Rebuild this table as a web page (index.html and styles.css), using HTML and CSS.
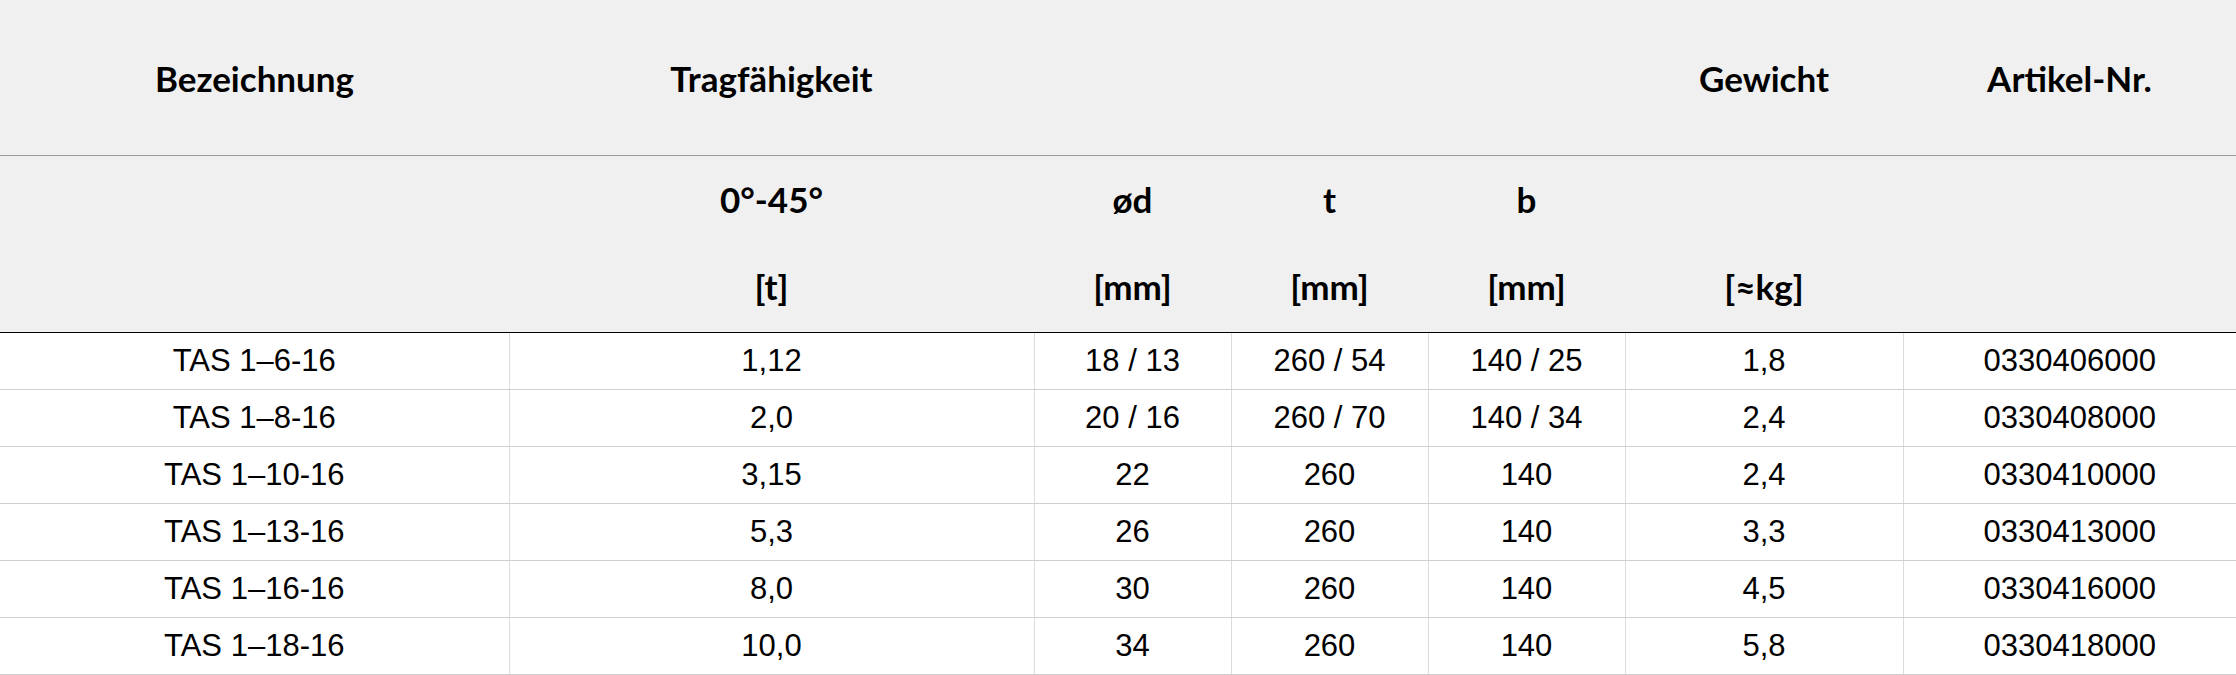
FILE: index.html
```html
<!DOCTYPE html>
<html lang="de">
<head>
<meta charset="utf-8">
<title>TAS Tabelle</title>
<link rel="stylesheet" href="styles.css">
</head>
<body>
<table class="spec">
  <colgroup>
    <col class="c-name">
    <col class="c-load">
    <col class="c-dim">
    <col class="c-dim">
    <col class="c-dim">
    <col class="c-weight">
    <col class="c-art">
  </colgroup>
  <thead>
    <tr class="h-top">
      <th>Bezeichnung</th>
      <th>Tragfähigkeit</th>
      <th></th>
      <th></th>
      <th></th>
      <th>Gewicht</th>
      <th>Artikel-Nr.</th>
    </tr>
    <tr class="h-mid">
      <th></th>
      <th>0°-45°</th>
      <th>ød</th>
      <th>t</th>
      <th>b</th>
      <th></th>
      <th></th>
    </tr>
    <tr class="h-unit">
      <th></th>
      <th>[t]</th>
      <th>[mm]</th>
      <th>[mm]</th>
      <th>[mm]</th>
      <th>[≈kg]</th>
      <th></th>
    </tr>
  </thead>
  <tbody>
    <tr><td>TAS 1–6-16</td><td>1,12</td><td>18 / 13</td><td>260 / 54</td><td>140 / 25</td><td>1,8</td><td>0330406000</td></tr>
    <tr><td>TAS 1–8-16</td><td>2,0</td><td>20 / 16</td><td>260 / 70</td><td>140 / 34</td><td>2,4</td><td>0330408000</td></tr>
    <tr><td>TAS 1–10-16</td><td>3,15</td><td>22</td><td>260</td><td>140</td><td>2,4</td><td>0330410000</td></tr>
    <tr><td>TAS 1–13-16</td><td>5,3</td><td>26</td><td>260</td><td>140</td><td>3,3</td><td>0330413000</td></tr>
    <tr><td>TAS 1–16-16</td><td>8,0</td><td>30</td><td>260</td><td>140</td><td>4,5</td><td>0330416000</td></tr>
    <tr><td>TAS 1–18-16</td><td>10,0</td><td>34</td><td>260</td><td>140</td><td>5,8</td><td>0330418000</td></tr>
  </tbody>
</table>
</body>
</html>
```
FILE: styles.css
```css
html, body {
  margin: 0;
  padding: 0;
  background: #ffffff;
}

.spec {
  width: 2236px;
  border-collapse: collapse;
  table-layout: fixed;
  color: #000000;
}

.c-name { width: 509px; }
.c-load { width: 525px; }
.c-dim { width: 197px; }
.c-weight { width: 278px; }
.c-art { width: 333px; }

.spec th {
  background: #f0f0f0;
  font-family: Lato, "Open Sans", sans-serif;
  font-weight: 700;
  font-size: 35px;
  text-align: center;
  vertical-align: middle;
  padding: 0;
}

.h-top th {
  height: 155px;
  border-bottom: 1px solid #9a9a9a;
}

.h-mid th {
  height: 86px;
}

.h-unit th {
  height: 87px;
  padding-bottom: 3px;
  border-bottom: 1px solid #000000;
}

.spec td {
  font-family: "Liberation Sans", Arial, sans-serif;
  font-size: 31px;
  text-align: center;
  vertical-align: middle;
  padding: 0;
  height: 56px;
  border-bottom: 1px solid #cfcfcf;
  border-left: 1px solid #dcdcdc;
}

.spec td:first-child {
  border-left: none;
}
```
